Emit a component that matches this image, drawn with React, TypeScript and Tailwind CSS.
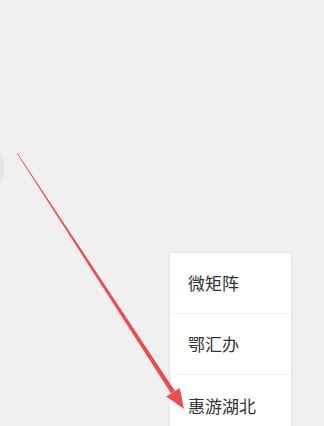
const items = ["微矩阵", "鄂汇办", "惠游湖北"];

function Arrow() {
  // tapered red line ending in a head, from (17,153) to tip (184,409)
  const x0 = 17, y0 = 153, x1 = 184, y1 = 409;
  const dx = x1 - x0, dy = y1 - y0;
  const len = Math.hypot(dx, dy);
  const ux = dx / len, uy = dy / len;
  const nx = -uy, ny = ux;
  const headLen = 20, headW = 8;
  const bx = x1 - ux * headLen, by = y1 - uy * headLen;
  const shaft = [
    [x0 + nx * 0.3, y0 + ny * 0.3],
    [bx + nx * 2.3, by + ny * 2.3],
    [bx - nx * 2.3, by - ny * 2.3],
    [x0 - nx * 0.3, y0 - ny * 0.3],
  ];
  const head = [
    [x1, y1],
    [bx + nx * headW, by + ny * headW],
    [bx - nx * headW, by - ny * headW],
  ];
  const pts = (p: number[][]) => p.map((q) => q.join(",")).join(" ");
  return (
    <svg className="pointer-events-none absolute left-0 top-0" width={324} height={426}>
      <polygon points={pts(shaft)} fill="#ec4b52" />
      <polygon points={pts(head)} fill="#ec4b52" />
    </svg>
  );
}

export default function App() {
  return (
    <div
      className="relative h-[426px] w-[324px] overflow-hidden bg-[#f0f0f0]"
      style={{ fontFamily: '"Noto Sans CJK SC", "Noto Sans", sans-serif' }}
    >
      <div className="absolute -left-[14px] top-[150px] h-[36px] w-[18px] rounded-full bg-[#e6e6e6]" />

      <div className="absolute left-[170px] top-[253px] w-[121px] bg-white shadow-[0_0_4px_rgba(0,0,0,0.08)]">
        {items.map((t, i) => (
          <div
            key={t}
            className={`flex h-[61px] items-center pl-[18px] text-[17px] text-[#333333] ${
              i < items.length - 1 ? "border-b border-[#f2f2f2]" : ""
            }`}
          >
            {t}
          </div>
        ))}
      </div>

      <Arrow />
    </div>
  );
}
